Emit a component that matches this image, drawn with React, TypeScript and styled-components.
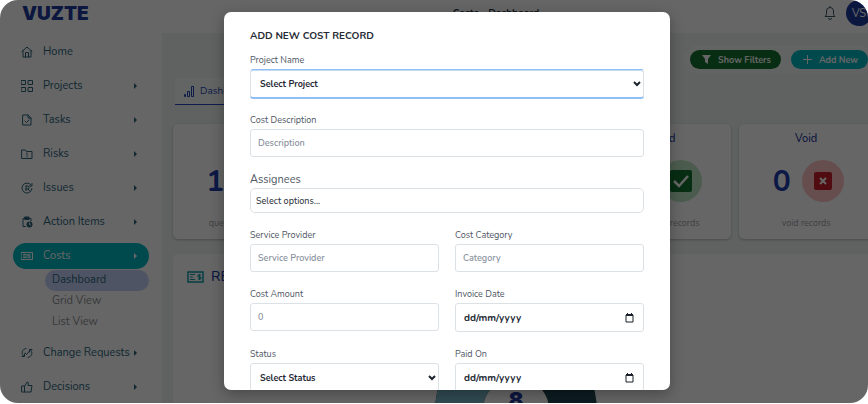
import React from "react";
import styled, { createGlobalStyle, css } from "styled-components";

const GlobalStyle = createGlobalStyle`
  *, *::before, *::after { box-sizing: border-box; }
  body { margin: 0; background: #fff; }
  body, button, input, select { font-family: Nunito, Lato, sans-serif; }
  button, input, select { margin: 0; }
  h1, h2, h3, p, ul { margin: 0; padding: 0; }
  ul { list-style: none; }
`;

const Frame = styled.div`
  position: relative;
  height: calc(100vh - 1px);
  overflow: hidden;
  border-radius: 18px;
  background: #fff;
`;

const Layout = styled.div`
  position: relative;
  width: calc(100% + 26px);
  height: 100%;
  display: grid;
  grid-template-columns: 162px minmax(0, 1fr);
`;

const Sidebar = styled.nav`
  padding: 6px 13px 0;
  overflow: hidden;
`;

const Brand = styled.div`
  height: 33px;
  padding-left: 9px;
  font: 900 19px/16px Inter, sans-serif;
  color: #1e3a9f;
`;

const NavRow = styled.a<{ $active?: boolean }>`
  display: grid;
  grid-template-columns: 22px 1fr 6px;
  align-items: center;
  height: 26px;
  margin-bottom: 8px;
  padding: 0 10px 0 8px;
  border-radius: 13px;
  font-size: 11px;
  line-height: 16px;
  white-space: nowrap;
  text-decoration: none;
  color: ${(p) => (p.$active ? "#fff" : "#2b657c")};
  background: ${(p) => (p.$active ? "#00b8c4" : "transparent")};
  svg { display: block; }
`;

const SubList = styled.ul`
  margin: -7px 0 7px 32px;
`;

const SubLink = styled.a<{ $active?: boolean }>`
  display: block;
  height: 21px;
  padding-left: 7px;
  border-radius: 11px;
  font-size: 11px;
  line-height: 20px;
  text-decoration: none;
  color: ${(p) => (p.$active ? "#2b657c" : "#8a8f94")};
  background: ${(p) => (p.$active ? "#c4d3f7" : "transparent")};
`;

const Content = styled.div`
  display: flex;
  flex-direction: column;
  background: #eff6f4;
  overflow: hidden;
`;

const TopBar = styled.header`
  flex: none;
  display: grid;
  grid-template-columns: 1fr auto 1fr;
  align-items: center;
  height: 33px;
  padding: 0 22px 8px 0;
  background: #fff;
`;

const PageTitle = styled.h1`
  grid-column: 2;
  margin-right: 42px;
  font-size: 10px;
  line-height: 16px;
  font-weight: 700;
  color: #1f3a45;
`;

const UserTools = styled.div`
  display: flex;
  align-items: center;
  justify-content: flex-end;
  gap: 10px;
`;

const IconButton = styled.button`
  display: flex;
  padding: 0;
  border: 0;
  background: none;
  color: #3c5a66;
`;

const Avatar = styled.button`
  width: 26px;
  height: 26px;
  padding: 0;
  border: 0;
  border-radius: 50%;
  background: #1e3a9f;
  color: #fff;
  font-size: 11px;
`;

const Main = styled.main`
  display: flex;
  flex-direction: column;
  padding: 12px 21px 0 11px;
`;

const Actions = styled.div`
  align-self: flex-end;
  display: flex;
  gap: 10px;
  padding: 5px;
  border-radius: 15px;
  background: #f5f9f8;
`;

const Pill = styled.button<{ $tone: string }>`
  display: flex;
  align-items: center;
  gap: 7px;
  height: 19px;
  padding: 0 10px 0 12px;
  border: 0;
  border-radius: 10px;
  background: ${(p) => p.$tone};
  color: #fff;
  font-size: 9px;
  line-height: 14px;
  font-weight: 700;
  white-space: nowrap;
`;

const Tabs = styled.div`
  display: flex;
  margin: 4px 0 19px 2px;
`;

const Tab = styled.button`
  display: flex;
  align-items: center;
  gap: 6px;
  height: 27px;
  padding: 0 9px;
  border: 0;
  border-bottom: 1px solid #2348c4;
  background: #f7fbfa;
  color: #2348b4;
  font-size: 10px;
`;

const Cards = styled.div`
  display: grid;
  grid-template-columns: repeat(5, minmax(0, 1fr));
  gap: 8px;
`;

const Card = styled.section`
  display: flex;
  flex-direction: column;
  align-items: center;
  height: 115px;
  padding-top: 8px;
  border-radius: 5px;
  background: #fff;
  box-shadow: 0 1px 3px rgba(0, 0, 0, 0.25);
`;

const CardTitle = styled.h2`
  font-size: 11px;
  line-height: 14px;
  font-weight: 500;
  color: #1e3a9f;
`;

const Metric = styled.div`
  display: flex;
  align-items: center;
  gap: 11px;
  height: 42px;
  margin: 14px 0 13px;
  padding-left: 4px;
  font-size: 30px;
  font-weight: 700;
  color: #1e40af;
`;

const Disc = styled.span<{ $tone: string }>`
  display: grid;
  place-items: center;
  width: 42px;
  height: 42px;
  border-radius: 50%;
  background: ${(p) => p.$tone};
`;

const CardNote = styled.p`
  font-size: 9px;
  line-height: 16px;
  white-space: nowrap;
  color: #a0a4a8;
`;

const Report = styled.section`
  margin-top: 15px;
  padding: 14px;
  border-radius: 5px 5px 0 0;
  background: #fff;
`;

const ReportTitle = styled.h2`
  display: flex;
  align-items: center;
  gap: 7px;
  font-size: 14px;
  line-height: 18px;
  font-weight: 500;
  color: #1e3a9f;
`;

const ChartBox = styled.div`
  display: flex;
  justify-content: center;
  padding: 41px 14px 0 0;
`;

const Backdrop = styled.div`
  position: absolute;
  inset: 0;
  display: grid;
  place-items: center;
  padding: 12px 0 13px;
  background: rgba(0, 0, 0, 0.6);
`;

const Dialog = styled.section`
  width: 100%;
  max-width: 446px;
  height: 100%;
  padding: 16px 26px;
  overflow: hidden;
  border-radius: 7px;
  background: #fff;
  box-shadow: 0 4px 14px rgba(0, 0, 0, 0.3);
`;

const DialogTitle = styled.h2`
  margin-bottom: 9px;
  font-size: 10px;
  line-height: 16px;
  font-weight: 700;
  color: #252b35;
`;

const Form = styled.form`
  display: grid;
  grid-template-columns: repeat(2, minmax(0, 1fr));
  gap: 15px 16px;
  align-items: start;
`;

const Field = styled.div<{ $wide?: boolean; $tight?: boolean }>`
  display: grid;
  gap: ${(p) => (p.$tight ? 0 : 2)}px;
  grid-column: ${(p) => (p.$wide ? "1 / -1" : "auto")};
`;

const Label = styled.label<{ $large?: boolean }>`
  font-size: ${(p) => (p.$large ? 11 : 9)}px;
  line-height: ${(p) => (p.$large ? 16 : 14)}px;
  color: #4f5664;
`;

const control = css`
  width: 100%;
  border: 1px solid #dce1e6;
  border-radius: 3px;
  background: #fff;
  font-size: 9px;
  line-height: 14px;
  color: #1f2733;
  outline: none;
`;

const Input = styled.input`
  ${control}
  height: 28px;
  padding: 0 7px;
  font-weight: 600;
  &::placeholder { color: #8b939e; opacity: 1; }
`;

const MultiInput = styled.input`
  ${control}
  height: 25px;
  padding: 0 5px;
  border-radius: 5px;
  font-weight: 500;
  &::placeholder { color: #333a44; opacity: 1; }
`;

const SelectWrap = styled.div`
  display: grid;
  align-items: center;
  > * { grid-area: 1 / 1; }
  svg { justify-self: end; margin-right: 3px; pointer-events: none; }
`;

const Select = styled.select<{ $focus?: boolean }>`
  ${control}
  appearance: none;
  height: 29px;
  padding: 0 9px;
  font-weight: 700;
  ${(p) =>
    p.$focus &&
    css`
      border-color: #8fbff5 #dce1e6;
      box-shadow: inset 0 1px 0 #c3dcf8, 0 1px 0 #8fbff5;
    `}
`;

const DateBox = styled.div`
  ${control}
  display: flex;
  align-items: center;
  height: 29px;
  padding: 0 9px 0 8px;
`;

const DateInput = styled.input`
  flex: 1;
  min-width: 0;
  padding: 0;
  border: 0;
  outline: none;
  background: none;
  font-size: 10px;
  font-weight: 700;
  &::placeholder { color: #252b35; opacity: 1; }
`;

const Stroke = ({ children, size = 12 }: { children: React.ReactNode; size?: number }) => (
  <svg width={size} height={size} viewBox="0 0 24 24" fill="none" stroke="currentColor" strokeWidth="2" strokeLinecap="round" strokeLinejoin="round">
    {children}
  </svg>
);

const icons: Record<string, React.ReactNode> = {
  home: <path d="M2 11 12 2l10 9M4 9v13h16V9M9 22v-9h6v9" />,
  grid: <path d="M1 1h8v8H1zM15 1h8v8h-8zM1 15h8v8H1zM15 15h8v8h-8z" strokeLinejoin="miter" />,
  task: <path d="M4 2h10l6 6v14H4zM14 2v6h6M8 14l3 3 5-5" />,
  risk: <path d="M2 4h7l2 3h11v14H2zM12 10v4M12 17v1" />,
  issue: <path d="M20 6A10 10 0 1 0 22 13M10 8v9M10 8h3a3 3 0 0 1 0 6h-3M14 14l4 4M22 3v5h-5" />,
  action: (
    <>
      <path d="M9 21H4V5h16v5" />
      <path d="M8 2h8v5H8z" fill="currentColor" />
      <circle cx="17" cy="17" r="6" fill="currentColor" stroke="none" />
      <path d="M17 14v3l2 1" stroke="#fff" />
    </>
  ),
  cost: <path d="M1 5h22v14H1zM5 9h5M5 12h3M5 15h5M18 9h-3v3h3v3h-3M12 9v6" />,
  change: <path d="M10 3C4 4 1 9 3 15l2 3M2 19h5v-5M14 21c6-1 9-6 7-12l-2-3M22 5h-5v5M8 12l3 3 5-6" />,
  thumb: <path d="M2 10h5v12H2zM7 11l5-9c3 0 3 3 2 7h8l-2 13H7" />,
};

const Caret = () => (
  <svg width="5" height="6" viewBox="0 0 5 6"><path d="M1 0l3 3-3 3z" fill="currentColor" /></svg>
);

const Chevron = () => (
  <svg width="8" height="6" viewBox="0 0 8 6"><path d="M1 1l3 3 3-3" fill="none" stroke="#1b222c" strokeWidth="2" /></svg>
);

const Calendar = () => (
  <svg width="9" height="10" viewBox="0 0 9 10">
    <path d="M1 2h7v7H1z" fill="none" stroke="#1b222c" />
    <path d="M1 1h7v2H1zM2 0h1v2H2zM6 0h1v2H6z" fill="#1b222c" />
  </svg>
);

type Item = { label: string; icon: string; plain?: boolean; active?: boolean; children?: string[] };

const items: Item[] = [
  { label: "Home", icon: "home", plain: true },
  { label: "Projects", icon: "grid" },
  { label: "Tasks", icon: "task" },
  { label: "Risks", icon: "risk" },
  { label: "Issues", icon: "issue" },
  { label: "Action Items", icon: "action" },
  { label: "Costs", icon: "cost", active: true, children: ["Dashboard", "Grid View", "List View"] },
  { label: "Change Requests", icon: "change" },
  { label: "Decisions", icon: "thumb" },
];

const DateField = ({ id, label }: { id: string; label: string }) => (
  <Field>
    <Label htmlFor={id}>{label}</Label>
    <DateBox>
      <DateInput id={id} placeholder="dd/mm/yyyy" />
      <IconButton type="button" aria-label={`Pick ${label}`}><Calendar /></IconButton>
    </DateBox>
  </Field>
);

export default function App() {
  return (
    <>
      <GlobalStyle />
      <Frame>
        <Layout>
          <Sidebar>
            <Brand>VUZTE</Brand>
            {items.map((item) => (
              <React.Fragment key={item.label}>
                <NavRow href="#" $active={item.active}>
                  <Stroke>{icons[item.icon]}</Stroke>
                  <span>{item.label}</span>
                  {!item.plain && <Caret />}
                </NavRow>
                {item.children && (
                  <SubList>
                    {item.children.map((name, i) => (
                      <li key={name}><SubLink href="#" $active={i === 0}>{name}</SubLink></li>
                    ))}
                  </SubList>
                )}
              </React.Fragment>
            ))}
          </Sidebar>
          <Content>
            <TopBar>
              <PageTitle>Costs - Dashboard</PageTitle>
              <UserTools>
                <IconButton aria-label="Notifications">
                  <svg width="12" height="14" viewBox="0 0 12 14" fill="none" stroke="currentColor">
                    <path d="M1 10.5h10L9.500 8.500V5a3.500 3.500 0 0 0-7 0v3.500zM6 0v1.500M4.500 12a1.500 1.500 0 0 0 3 0" />
                  </svg>
                </IconButton>
                <Avatar>VS</Avatar>
              </UserTools>
            </TopBar>
            <Main>
              <Actions>
                <Pill $tone="#127030">
                  <svg width="9" height="9" viewBox="0 0 9 9"><path d="M0 0h9L6 4v5L3 7V4z" fill="#fff" /></svg>
                  Show Filters
                </Pill>
                <Pill $tone="#00b8c4">
                  <svg width="9" height="9" viewBox="0 0 9 9"><path d="M4.500 0v9M0 4.500h9" stroke="#fff" /></svg>
                  Add New
                </Pill>
              </Actions>
              <Tabs>
                <Tab>
                  <svg width="10" height="11" viewBox="0 0 10 11" fill="none" stroke="currentColor">
                    <path d="M.5 8.500h1v2h-1zM3.500 5.500h2v5h-2zM7.500 .5h2v10h-2z" />
                  </svg>
                  Dashboard
                </Tab>
              </Tabs>
              <Cards>
                <Card>
                  <CardTitle>New</CardTitle>
                  <Metric>1<Disc $tone="#c7d7fe" /></Metric>
                  <CardNote>queued records</CardNote>
                </Card>
                <Card />
                <Card />
                <Card>
                  <CardTitle>Paid</CardTitle>
                  <Metric>
                    0
                    <Disc $tone="#bbe5c4">
                      <svg width="22" height="22" viewBox="0 0 22 22">
                        <rect width="22" height="22" rx="2" fill="#127030" />
                        <path d="M4 11l5 5 9-10" fill="none" stroke="#fff" strokeWidth="2.500" />
                      </svg>
                    </Disc>
                  </Metric>
                  <CardNote>approved records</CardNote>
                </Card>
                <Card>
                  <CardTitle>Void</CardTitle>
                  <Metric>
                    0
                    <Disc $tone="#ffc2c5">
                      <svg width="18" height="18" viewBox="0 0 18 18">
                        <rect width="18" height="18" rx="2" fill="#c81e28" />
                        <path d="M6 6l6 6M12 6l-6 6" stroke="#fff" strokeWidth="2" />
                      </svg>
                    </Disc>
                  </Metric>
                  <CardNote>void records</CardNote>
                </Card>
              </Cards>
              <Report>
                <ReportTitle>
                  <svg width="17" height="12" viewBox="0 0 17 12" fill="none" stroke="#0e9aa7">
                    <path d="M1 1h15v10H1z" strokeWidth="1.500" />
                    <path d="M3 3.500h5M3 6h3M3 8.500h5M14 4h-3v2h3v2h-3M12.500 3v6" />
                  </svg>
                  RECORDS
                </ReportTitle>
                <ChartBox>
                  <svg width="166" height="166" viewBox="0 0 166 166">
                    <circle cx="83" cy="83" r="57" fill="none" stroke="#1f4852" strokeWidth="48" />
                    <path d="M83 26A57 57 0 0 0 83 140" fill="none" stroke="#7bb9cc" strokeWidth="48" />
                    <text x="83" y="81" textAnchor="middle" fontFamily="Inter, sans-serif" fontSize="22" fontWeight="900" fill="#1e3a9f">8</text>
                  </svg>
                </ChartBox>
              </Report>
            </Main>
          </Content>
          <Backdrop>
            <Dialog role="dialog" aria-labelledby="dialog-title">
              <DialogTitle id="dialog-title">ADD NEW COST RECORD</DialogTitle>
              <Form>
                <Field $wide>
                  <Label htmlFor="project">Project Name</Label>
                  <SelectWrap>
                    <Select id="project" $focus><option>Select Project</option></Select>
                    <Chevron />
                  </SelectWrap>
                </Field>
                <Field $wide>
                  <Label htmlFor="description">Cost Description</Label>
                  <Input id="description" placeholder="Description" />
                </Field>
                <Field $wide $tight>
                  <Label htmlFor="assignees" $large>Assignees</Label>
                  <MultiInput id="assignees" placeholder="Select options..." />
                </Field>
                <Field>
                  <Label htmlFor="provider">Service Provider</Label>
                  <Input id="provider" placeholder="Service Provider" />
                </Field>
                <Field>
                  <Label htmlFor="category">Cost Category</Label>
                  <Input id="category" placeholder="Category" />
                </Field>
                <Field>
                  <Label htmlFor="amount">Cost Amount</Label>
                  <Input id="amount" placeholder="0" inputMode="decimal" />
                </Field>
                <DateField id="invoice" label="Invoice Date" />
                <Field>
                  <Label htmlFor="status">Status</Label>
                  <SelectWrap>
                    <Select id="status"><option>Select Status</option></Select>
                    <Chevron />
                  </SelectWrap>
                </Field>
                <DateField id="paid" label="Paid On" />
              </Form>
            </Dialog>
          </Backdrop>
        </Layout>
      </Frame>
    </>
  );
}
